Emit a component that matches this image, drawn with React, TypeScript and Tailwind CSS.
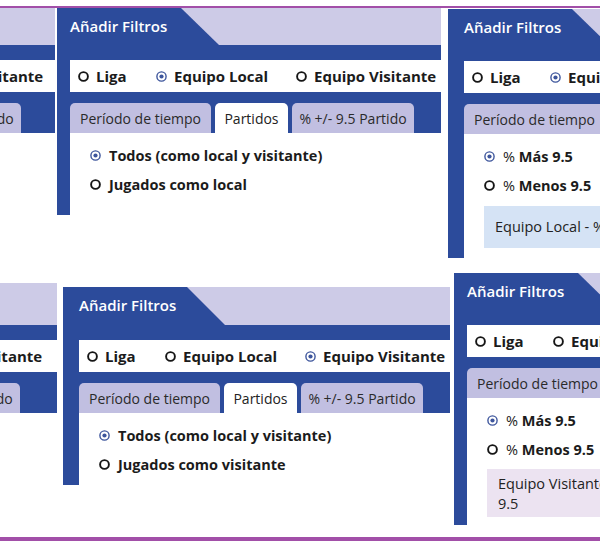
import type { ReactNode } from "react";

const FONT = { fontFamily: '"Open Sans", "Liberation Sans", sans-serif' };

type Team = "local" | "visitante";
type Variant = "partidos" | "pct";

function Radio({ on }: { on?: boolean }) {
  // small outlined radio; checked one is a blue ring with a dot
  return on ? (
    <svg width="11" height="11" viewBox="0 0 11 11" className="shrink-0">
      <circle cx="5.5" cy="5.5" r="4.6" fill="none" stroke="#3d559c" strokeWidth="1.4" />
      <circle cx="5.5" cy="5.5" r="2.1" fill="#3d559c" />
    </svg>
  ) : (
    <svg width="11" height="11" viewBox="0 0 11 11" className="shrink-0">
      <circle cx="5.5" cy="5.5" r="4.4" fill="none" stroke="#151515" strokeWidth="1.9" />
    </svg>
  );
}

function Option({ on, children }: { on?: boolean; children: ReactNode }) {
  return (
    <div className="flex h-[29px] items-center gap-[8px] text-[14.5px] font-bold text-[#1b1b1b]">
      <Radio on={on} />
      <span className="whitespace-nowrap">{children}</span>
    </div>
  );
}

function Tab({ active, w, children }: { active?: boolean; w: string; children: ReactNode }) {
  return (
    <div
      className={`flex h-[30px] shrink-0 items-center justify-center whitespace-nowrap rounded-t-[5px] text-[14px] font-medium ${w} ${
        active ? "bg-white text-[#222]" : "bg-[#c1bfe1] text-[#2a2a2a]"
      }`}
    >
      {children}
    </div>
  );
}

type PanelProps = {
  x: number;
  y: number;
  w: number;
  h: number;
  ox?: number;
  bw?: number;
  headerH?: number;
  team: Team;
  variant: Variant;
};

function FilterPanel({ x, y, w, h, ox = 0, bw = 13, headerH = 37, team, variant }: PanelProps) {
  return (
    <div className="absolute overflow-hidden bg-white" style={{ left: x, top: y, width: w, height: h }}>
      <div className="flex h-full w-[400px] flex-col" style={{ marginLeft: ox }}>
        {/* slanted title tab */}
        <div className="flex shrink-0 bg-[#cdcbe7]" style={{ height: headerH }}>
          <div
            className="flex w-[162px] items-center bg-[#2c4b9b] pb-[1px] text-[15px] font-semibold text-white [clip-path:polygon(0_0,124px_0,162px_100%,0_100%)]"
            style={{ paddingLeft: bw }}
          >
            Añadir Filtros
          </div>
        </div>
        <div className="flex flex-1 flex-col bg-[#2c4b9b] pt-[15px]" style={{ paddingLeft: bw }}>
          <div className="flex h-[32px] items-center bg-white pl-[8px] text-[15px] font-bold text-[#1b1b1b]">
            <div className="flex w-[78px] items-center gap-[7px]">
              <Radio />
              <span>Liga</span>
            </div>
            <div className="flex w-[140px] items-center gap-[7px]">
              <Radio on={team === "local"} />
              <span className="whitespace-nowrap">Equipo Local</span>
            </div>
            <div className="flex items-center gap-[7px]">
              <Radio on={team === "visitante"} />
              <span className="whitespace-nowrap">Equipo Visitante</span>
            </div>
          </div>
          <div className="mt-[11px] flex gap-[4px]">
            <Tab w="w-[141px]">Período de tiempo</Tab>
            <Tab w="w-[73px]" active={variant === "partidos"}>
              Partidos
            </Tab>
            <Tab w="w-[122px]" active={variant === "pct"}>
              % +/- 9.5 Partido
            </Tab>
          </div>
          <div className="flex-1 bg-white pl-[20px] pt-[8px]">
            {variant === "partidos" ? (
              <>
                <Option on>Todos (como local y visitante)</Option>
                <Option>{team === "local" ? "Jugados como local" : "Jugados como visitante"}</Option>
              </>
            ) : (
              <>
                <Option on>
                  <span className="font-medium">%</span> Más 9.5
                </Option>
                <Option>
                  <span className="font-medium">%</span> Menos 9.5
                </Option>
                {team === "local" ? (
                  <div className="mt-[6px] w-[330px] bg-[#d5e3f5] px-[11px] py-[11px] text-[14.5px] font-medium leading-[20px] text-[#222]">
                    Equipo Local - % Más 9.5
                  </div>
                ) : (
                  <div className="mt-[5px] w-[330px] bg-[#ece3f1] px-[11px] pb-[3px] pt-[5px] text-[14.5px] font-medium leading-[20px] text-[#222]">
                    Equipo Visitante - % Partidos Más de
                    <br />
                    9.5
                  </div>
                )}
              </>
            )}
          </div>
        </div>
      </div>
    </div>
  );
}

export default function App() {
  return (
    <div className="h-[543px] w-[600px] overflow-hidden bg-white" style={FONT}>
      <div className="h-[6px]" />
      <div className="h-[2px] bg-[#a24fa8]" />
      <div className="relative h-[529px]">
        <FilterPanel x={0} y={0} w={55} h={207} ox={-336} team="local" variant="partidos" />
        <FilterPanel x={57} y={0} w={384} h={207} team="local" variant="partidos" />
        <FilterPanel x={448} y={1} w={152} h={249} bw={16} team="local" variant="pct" />
        <FilterPanel x={0} y={275} w={57} h={130} ox={-337} headerH={42} team="visitante" variant="partidos" />
        <FilterPanel x={63} y={279} w={387} h={198} bw={16} headerH={38} team="visitante" variant="partidos" />
        <FilterPanel x={454} y={265} w={146} h={252} team="visitante" variant="pct" />
      </div>
      <div className="h-[4px] bg-[#a24fa8]" />
    </div>
  );
}
